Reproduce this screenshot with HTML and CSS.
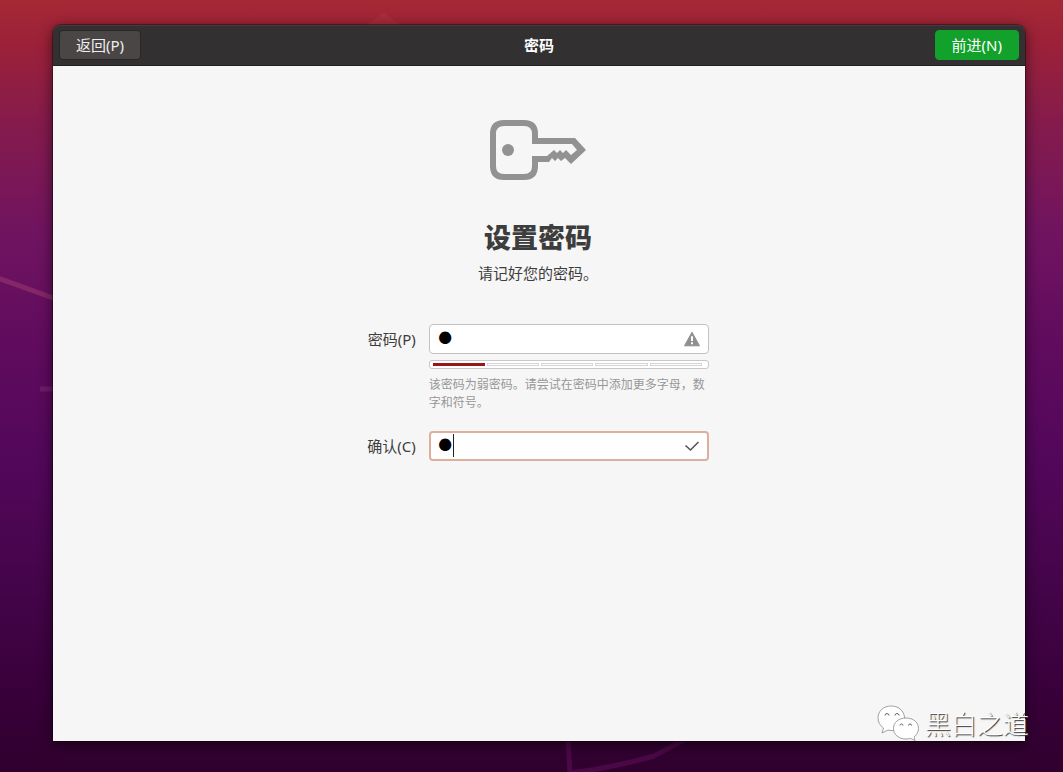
FILE: index.html
```html
<!DOCTYPE html>
<html lang="zh-CN">
<head>
<meta charset="utf-8">
<meta name="viewport" content="width=device-width, initial-scale=1">
<title>密码</title>
<link rel="stylesheet" href="styles.css">
</head>
<body class="desktop">
<svg class="wallpaper" viewBox="0 0 1063 772" preserveAspectRatio="none" aria-hidden="true">
  <g fill="none" stroke-width="5">
    <path d="M-2 278 56 299" stroke="#842668"/>
    <path d="M40 389H56" stroke="#701a68"/>
    <path d="M568 738 570 774" stroke="#4b0846"/>
    <path d="M570 773Q612 768 654 756L684 740" stroke="#4b0846"/>
  </g>
  <path d="M364 27 384 12 402 27Z" fill="#b0383c" opacity=".4"/>
</svg>
<main class="window">
  <header class="titlebar">
    <button class="button button-back" type="button">返回(P)</button>
    <h1 class="titlebar-title">密码</h1>
    <button class="button button-next" type="submit" form="password-form">前进(N)</button>
  </header>
  <section class="page">
    <svg class="key" viewBox="0 0 96 60" aria-hidden="true">
      <path d="M45 21V14Q45 3 34 3H14Q3 3 3 14V46Q3 57 14 57H34Q45 57 45 46V39" fill="none" stroke="#929292" stroke-width="6"/>
      <path d="M42 18H85L96 30 81 44 75 38 71 41 68 38 65 41 62 38 59 42H42V36H57L64 30 67 33 70 30 73 33 76 30 81 35 87 30 82 24H42Z" fill="#929292"/>
      <circle cx="18" cy="30" r="6" fill="#929292"/>
    </svg>
    <h2 class="heading">设置密码</h2>
    <p class="subheading">请记好您的密码。</p>
    <form class="form" id="password-form">
      <label class="label" for="password">密码(P)</label>
      <div class="field">
        <input class="input" id="password" type="password" value="1" aria-describedby="hint">
        <svg class="field-icon" viewBox="0 0 16 16" aria-hidden="true">
          <path d="M8 1.2 15.5 14.8H.5Z" fill="#8f8f8f" stroke="#8f8f8f" stroke-linejoin="round"/>
          <path d="M8 5.3V10M8 11.3V13.3" stroke="#fff" stroke-width="2"/>
        </svg>
      </div>
      <div class="strength" role="meter" aria-label="密码强度" aria-valuemin="0" aria-valuemax="5" aria-valuenow="1">
        <span class="segment segment-on"></span><span class="segment"></span><span class="segment"></span><span class="segment"></span><span class="segment"></span>
      </div>
      <p class="hint" id="hint">该密码为弱密码。请尝试在密码中添加更多字母，数字和符号。</p>
      <label class="label" for="confirm">确认(C)</label>
      <div class="field">
        <input class="input input-active" id="confirm" type="password" value="1">
        <span class="caret"></span>
        <svg class="field-icon" viewBox="0 0 16 16" aria-hidden="true">
          <path d="M1.5 7.5 6.5 12 14.5 4" fill="none" stroke="#555" stroke-width="1.6"/>
        </svg>
      </div>
    </form>
  </section>
</main>
<div class="watermark">
  <svg class="watermark-logo" viewBox="0 0 42 36" aria-hidden="true">
    <g fill="#fff" stroke="#8a8a8a" stroke-width=".8">
      <path d="M14 1C6.500 1 1 6 1 13c0 4 2 7.500 5.500 10L5 28l6-3c2 .6 4 .7 6 .5C28 25 28 17 27.500 12 26.500 5 21 1 14 1Z"/>
      <path d="M29 13c-7.500 0-12.500 4.500-12.500 10.500S21.500 34 29 34c1.500 0 3-.2 4.500-.6L38 35.500 37 32c2.500-2 4.500-5 4.500-8.500C41.500 17.500 36.500 13 29 13Z"/>
    </g>
    <g fill="none" stroke="#666">
      <path d="M8 10.500a2 2 0 0 1 4 0M18 10.500a2 2 0 0 1 4 0M23 20.500a1.500 1.500 0 0 1 3 0M31.500 20.500a1.500 1.500 0 0 1 3 0"/>
    </g>
  </svg>
  <span>黑白之道</span>
</div>
</body>
</html>
```
FILE: styles.css
```css
* {
  box-sizing: border-box;
}

.desktop {
  position: relative;
  display: flex;
  min-height: 100vh;
  margin: 0;
  padding: 25px 38px 31px 53px;
  background: linear-gradient(#a52835 0%, #9b2139 6%, #851b4c 16%, #701460 30%, #600b5e 45%, #52075a 60%, #45054a 75%, #38003a 90%, #30002d 100%);
  color: #3d3d3d;
  font-family: "Noto Sans", "Noto Sans CJK SC", sans-serif;
  font-size: 15px;
  line-height: 20px;
}

.wallpaper {
  position: absolute;
  inset: 0;
  width: 100%;
  height: 100%;
}

.window {
  position: relative;
  display: flex;
  flex: 1;
  flex-direction: column;
  border-radius: 8px 8px 0 0;
  background: linear-gradient(#323030 41px, #f6f6f6 41px);
  box-shadow: 0 0 0 1px rgba(0, 0, 0, 0.35), 0 3px 14px rgba(0, 0, 0, 0.6);
}

.titlebar {
  display: grid;
  grid-template-columns: 1fr auto 1fr;
  align-items: center;
  height: 41px;
  padding: 0 6px;
  border-bottom: 1px solid #1f1d1d;
  border-radius: 8px 8px 0 0;
  background: #323030;
  box-shadow: inset 0 1px #3f3d3d;
  color: #fff;
}

.titlebar-title {
  margin: 0;
  font-size: 15px;
  font-weight: 700;
}

.button {
  height: 30px;
  padding: 0 16px;
  border: 1px solid #2a2727;
  border-radius: 4px;
  color: #fff;
  font: inherit;
}

.button-back {
  justify-self: start;
  background: #4a4646;
  color: #eee;
}

.button-next {
  justify-self: end;
  border-color: #12a12b;
  background: #12a12b;
}

.page {
  display: flex;
  flex: 1;
  flex-direction: column;
  align-items: center;
  padding: 54px 18px 16px 16px;
}

.key {
  width: 96px;
  height: 60px;
}

.heading {
  margin: 40px 0 0;
  font-size: 27px;
  font-weight: 900;
  line-height: 36px;
}

.subheading {
  margin: 7px 0 0;
}

.form {
  display: grid;
  grid-template-columns: auto 280px;
  column-gap: 13px;
  align-items: center;
  margin-top: 41px;
}

.label {
  text-align: right;
}

.field {
  position: relative;
}

.input {
  display: block;
  width: 100%;
  height: 30px;
  padding: 0 32px 0 3px;
  border: 1px solid #c4c2c0;
  border-radius: 4px;
  outline: 0;
  background: #fff;
  color: #000;
  font-family: "DejaVu Sans", sans-serif;
  font-size: 42px;
}

.input-active {
  padding-left: 2px;
  border: 2px solid #dcb09c;
}

.field-icon {
  position: absolute;
  top: 7px;
  right: 9px;
  width: 16px;
  height: 16px;
}

.caret {
  position: absolute;
  top: 3px;
  left: 24px;
  width: 1px;
  height: 23px;
  background: #222;
}

.strength {
  display: flex;
  grid-column: 2;
  gap: 2px;
  height: 9px;
  margin-top: 6px;
  padding: 2px 6px 2px 3px;
  border: 1px solid #c8c8c8;
  border-radius: 3px;
  background: #fff;
}

.segment {
  flex: 1;
  height: 3px;
  border: 1px solid #d4d4d4;
}

.segment-on {
  border-color: #9b1518;
  background: #9b1518;
}

.hint {
  grid-column: 2;
  margin: 7px 0 19px;
  color: #979797;
  font-size: 12px;
  line-height: 18px;
}

.watermark {
  position: absolute;
  right: 34px;
  bottom: 31px;
  display: flex;
  gap: 6px;
  align-items: center;
  color: #fff;
  font-family: "Noto Sans CJK SC", sans-serif;
  font-size: 26px;
  font-weight: 300;
  line-height: 36px;
  text-shadow: 1px 1px 1px #333;
}

.watermark-logo {
  width: 42px;
  height: 36px;
}
```
